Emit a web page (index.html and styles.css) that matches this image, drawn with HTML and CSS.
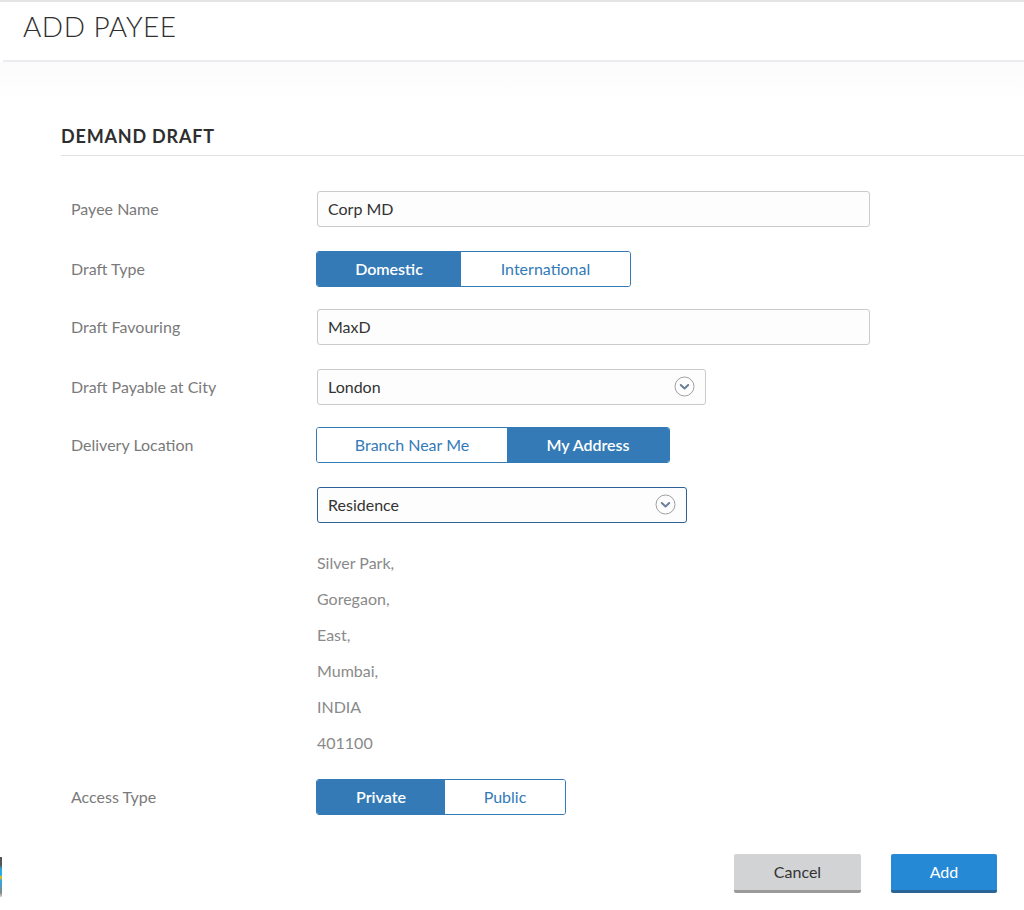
FILE: index.html
```html
<!DOCTYPE html>
<html>
<head>
<meta charset="utf-8">
<link rel="stylesheet" href="styles.css">
</head>
<body>
<div class="page">
  <header class="header">
    <h1 class="title">ADD PAYEE</h1>
  </header>
  <div class="header-rule"></div>
  <div class="shade"></div>
  <section class="section">
    <h2 class="section-title">DEMAND DRAFT</h2>
    <div class="form">
      <div class="row">
        <div class="label">Payee Name</div>
        <div class="field"><div class="input w-full">Corp MD</div></div>
      </div>
      <div class="row">
        <div class="label">Draft Type</div>
        <div class="field">
          <div class="toggle">
            <span class="opt active w145">Domestic</span>
            <span class="opt w170">International</span>
          </div>
        </div>
      </div>
      <div class="row">
        <div class="label">Draft Favouring</div>
        <div class="field"><div class="input w-full">MaxD</div></div>
      </div>
      <div class="row">
        <div class="label">Draft Payable at City</div>
        <div class="field">
          <div class="input select w-city">
            <span>London</span>
            <svg class="chev" width="21" height="21" viewBox="0 0 21 21"><circle cx="10.5" cy="10.5" r="9.5" fill="none" stroke="#a0a0a0" stroke-width="1"/><path d="M6.8 9 L10.5 12.5 L14.2 9" fill="none" stroke="#6a7f99" stroke-width="2" stroke-linecap="round" stroke-linejoin="round"/></svg>
          </div>
        </div>
      </div>
      <div class="row">
        <div class="label">Delivery Location</div>
        <div class="field">
          <div class="toggle">
            <span class="opt w191">Branch Near Me</span>
            <span class="opt active w163">My Address</span>
          </div>
        </div>
      </div>
      <div class="row">
        <div class="label"></div>
        <div class="field">
          <div class="input select focus w-res">
            <span>Residence</span>
            <svg class="chev" width="21" height="21" viewBox="0 0 21 21"><circle cx="10.5" cy="10.5" r="9.5" fill="none" stroke="#a0a0a0" stroke-width="1"/><path d="M6.8 9 L10.5 12.5 L14.2 9" fill="none" stroke="#6a7f99" stroke-width="2" stroke-linecap="round" stroke-linejoin="round"/></svg>
          </div>
        </div>
      </div>
      <div class="address">
        <div>Silver Park,</div>
        <div>Goregaon,</div>
        <div>East,</div>
        <div>Mumbai,</div>
        <div>INDIA</div>
        <div>401100</div>
      </div>
      <div class="row last">
        <div class="label">Access Type</div>
        <div class="field">
          <div class="toggle">
            <span class="opt active w129">Private</span>
            <span class="opt w121">Public</span>
          </div>
        </div>
      </div>
    </div>
  </section>
  <footer class="footer">
    <div class="edge"></div>
    <div class="actions">
      <button class="btn btn-cancel">Cancel</button>
      <button class="btn btn-add">Add</button>
    </div>
  </footer>
</div>
</body>
</html>
```

FILE: styles.css
```css
html, body {
  margin: 0;
  padding: 0;
  background: #ffffff;
}
body {
  font-family: Lato, "Open Sans", "Liberation Sans", sans-serif;
  color: #333333;
}
.page {
  border-top: 2px solid #e4e4e6;
}
.header {
  height: 58px;
  padding: 8px 0 0 23px;
  box-sizing: border-box;
}
.title {
  margin: 0;
  font-size: 28px;
  font-weight: 300;
  line-height: 1.2;
  letter-spacing: 0.5px;
  color: #2f2f2f;
}
.header-rule {
  margin-left: 3px;
  height: 2px;
  background: #ebebf0;
}
.shade {
  height: 40px;
  background: linear-gradient(#fbfbfc, #ffffff);
}
.section {
  padding-left: 61px;
}
.section-title {
  margin: 24px 0 0 0;
  font-size: 18px;
  font-weight: 700;
  line-height: 1.2;
  letter-spacing: 0.8px;
  color: #2e2e2e;
  padding-bottom: 7px;
  border-bottom: 1px solid #e2e2e2;
}
.form {
  padding-top: 35px;
  padding-left: 10px;
}
.row {
  display: flex;
  align-items: center;
  min-height: 36px;
  margin-bottom: 22px;
}
.row:nth-child(odd) {
  margin-bottom: 24px;
}
.row.last {
  margin-top: 18px;
  margin-bottom: 0;
}
.label {
  width: 246px;
  font-size: 16px;
  color: #7a7a7a;
}
.field {
  flex: 1;
}
.input {
  box-sizing: border-box;
  height: 36px;
  border: 1px solid #cbcbcb;
  border-radius: 3px;
  background: #fdfdfd;
  padding: 0 10px;
  font-size: 16px;
  color: #333;
  display: flex;
  align-items: center;
}
.w-full { width: 553px; }
.w-city { width: 389px; }
.w-res { width: 370px; }
.select {
  justify-content: space-between;
  padding-right: 10px;
}
.select.focus {
  border-color: #2e6194;
}
.chev {
  display: block;
}
.toggle {
  display: inline-flex;
  height: 36px;
  box-sizing: border-box;
  border: 1px solid #337ab7;
  border-radius: 3px;
  overflow: hidden;
  margin-left: -1px;
}
.opt {
  display: flex;
  align-items: center;
  justify-content: center;
  font-size: 16px;
  color: #337ab7;
  background: #fff;
  box-sizing: border-box;
}
.opt.active {
  background: #337ab7;
  color: #ffffff;
  font-weight: 600;
}
.w145 { width: 144px; }
.w170 { width: 169px; }
.w191 { width: 190px; }
.w163 { width: 162px; }
.w129 { width: 128px; }
.w121 { width: 120px; }
.address {
  margin-left: 246px;
  font-size: 16px;
  line-height: 36px;
  color: #8a8a8a;
  margin-top: 0;
}
.footer {
  display: flex;
  justify-content: space-between;
  align-items: flex-start;
  margin-top: 39px;
}
.edge {
  width: 2px;
  height: 40px;
  margin-top: 3px;
  background: linear-gradient(#555 0, #555 20%, #2aa8e0 30%, #2aa8e0 45%, #f2c200 50%, #2aa8e0 60%, #888 90%, #ddd 100%);
}
.actions {
  display: flex;
  gap: 30px;
  padding-right: 27px;
}
.btn {
  height: 39px;
  border: none;
  border-radius: 2px;
  font-family: Lato, "Open Sans", sans-serif;
  font-size: 16px;
  padding: 0;
  box-sizing: border-box;
  cursor: pointer;
}
.btn-cancel {
  width: 127px;
  background: #d2d3d5;
  color: #333;
  border-bottom: 3px solid #9a9a9a;
}
.btn-add {
  width: 106px;
  background: #2589d6;
  color: #fff;
  border-bottom: 3px solid #2a6496;
}
```
